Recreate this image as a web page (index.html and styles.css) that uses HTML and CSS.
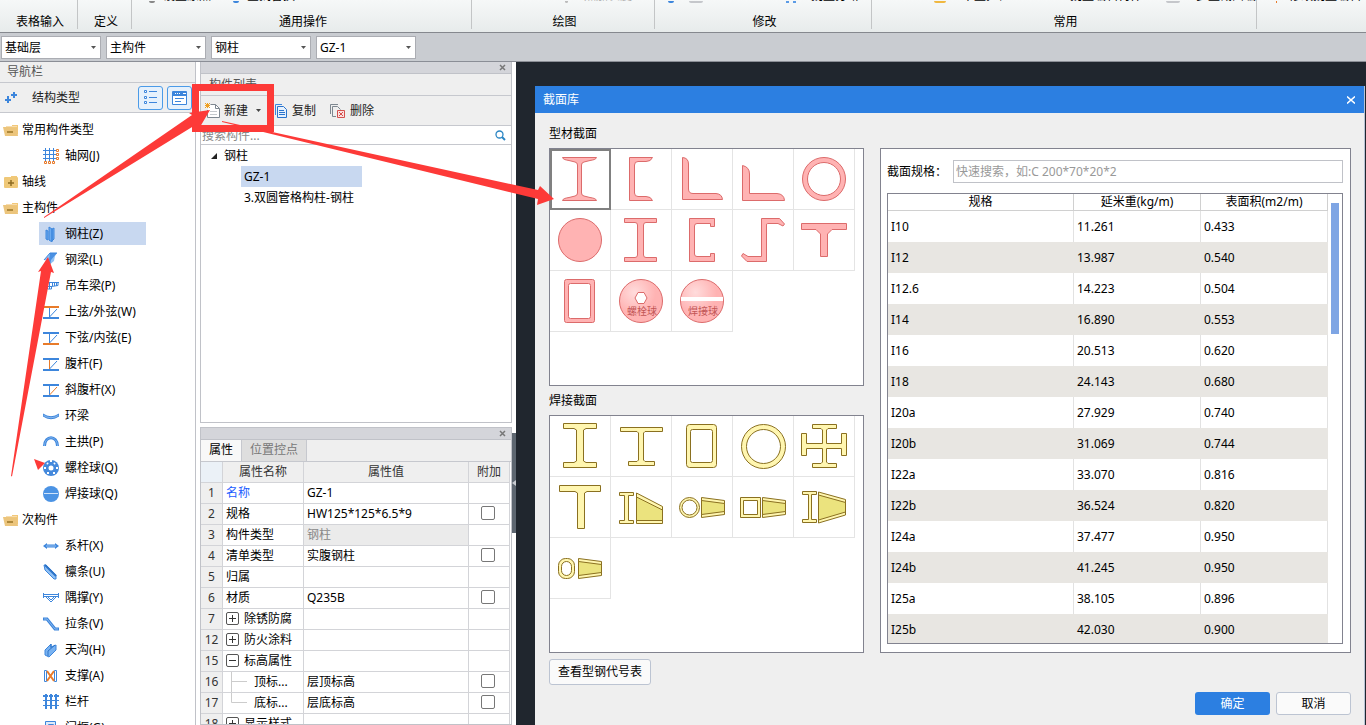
FILE: index.html
```html
<!DOCTYPE html>
<html lang="zh-CN">
<head>
<meta charset="utf-8">
<title>截面库</title>
<link rel="stylesheet" href="styles.css">
</head>
<body>
<svg class="defs" aria-hidden="true">
  <defs>
    <radialGradient id="ball" cx="35%" cy="30%" r="70%"><stop offset="0" stop-color="#ffdcdc"/><stop offset="0.7" stop-color="#ffb3b3"/></radialGradient>
    <symbol id="folder-open" viewBox="0 0 16 12"><path d="M9 1h6v9h-1V4H9z" fill="#f2c878"/><path d="M3 2.500h11" stroke="#f7ddb0"/><path d="M0 3h9l1 1h4l1 8H2z" fill="#ecc57c"/><path d="M4 8h6" stroke="#9a7426" stroke-width="1.500"/></symbol>
    <symbol id="folder-closed" viewBox="0 0 16 12"><path d="M8 0h6v2H8z" fill="#f2c878"/><rect x="1" y="1" width="14" height="11" rx="1" fill="#efc878"/><path d="M8 4v6M5 7h6" stroke="#8f6c22" stroke-width="1.500"/></symbol>
    <symbol id="taper" viewBox="0 0 24 21"><path d="M.5.5L23.500 3.500V17.500L.5 20.500Z" fill="#fff6b0" stroke="#8a7020"/><path d="M.5 3.500L23.500 6.500V14.500L.5 17.500Z" fill="#ebe37e" stroke="#8a7020"/></symbol>
  </defs>
</svg>

<div class="app">
  <header class="ribbon">
    <section class="group g-table"><div class="clip"></div><h2>表格输入</h2></section>
    <section class="group g-define"><div class="clip"></div><h2>定义</h2></section>
    <section class="group g-general"><div class="clip clip-general"><i class="dot gray"></i><span>设置原点</span><i class="dot blue"></i><span>查找替换</span></div><h2>通用操作</h2></section>
    <section class="group g-draw"><div class="clip clip-draw"><i class="dot line"></i><span class="muted">点加长度</span></div><h2>绘图</h2></section>
    <section class="group g-modify"><div class="clip clip-modify"><i class="dot blue"></i><i class="dot bar"></i><i class="dot pair"></i><span>批量打断</span></div><h2>修改</h2></section>
    <section class="group g-common"><div class="clip clip-common"><i class="dot yellow"></i><span>单重拉框</span><span>批量编辑构件</span><i class="dot bar"></i><span>多重截面编</span></div><h2>常用</h2></section>
    <section class="group g-last"><div class="clip clip-last"><i class="dot orange"></i><span>修改批量编辑</span></div></section>
  </header>

  <div class="selectors">
    <select aria-label="楼层"><option>基础层</option></select>
    <select aria-label="构件分类"><option>主构件</option></select>
    <select aria-label="构件类型"><option>钢柱</option></select>
    <select aria-label="构件"><option>GZ-1</option></select>
  </div>

  <main class="workspace">
    <nav class="navigator">
      <h2 class="nav-title">导航栏</h2>
      <div class="nav-tools">
        <svg class="plus" width="13" height="12" viewBox="0 0 13 12"><path d="M3 4v7M0 8h6M9 0v6M6 3h6" stroke="#3d86dc" stroke-width="2"/></svg>
        <span class="nav-label">结构类型</span>
        <button class="view" aria-label="列表"><svg width="13" height="15" viewBox="0 0 13 15"><path d="M5 1.500h8M5 7.500h8M5 12.500h8" stroke="#3d86dc"/><path d="M.5.5h2v2h-2zM.5 6.500h2v2h-2zM.5 11.500h2v2h-2z" fill="#fff" stroke="#3d86dc"/></svg></button>
        <button class="view" aria-label="面板"><svg width="15" height="14" viewBox="0 0 15 14"><path d="M.5.5h14v13H.5z" fill="#fff" stroke="#3d86dc"/><path d="M1 1h13v4H1z" fill="#3d86dc"/><path d="M3 2.500h1M5 2.500h1M7 2.500h1M11 2.500h3" stroke="#fff"/><path d="M3 7.500h9M3 10.500h6" stroke="#3d86dc"/></svg></button>
      </div>
      <ul class="tree">
        <li class="folder"><svg class="f"><use href="#folder-open"/></svg>常用构件类型</li>
        <li class="item"><svg viewBox="0 0 16 16"><path d="M2.500 0v13M6.500 0v13M10.500 0v13M0 2.500h13M0 6.500h13M0 10.500h13" stroke="#3d86dc"/><path d="M13.500 1.500h2v2h-2zM13.500 5.500h2v2h-2zM13.500 9.500h2v2h-2zM1.500 13.500h2v2h-2zM5.500 13.500h2v2h-2zM9.500 13.500h2v2h-2z" fill="#fff" stroke="#e87b2a"/></svg><span>轴网(J)</span></li>
        <li class="folder"><svg class="f"><use href="#folder-closed"/></svg>轴线</li>
        <li class="folder"><svg class="f"><use href="#folder-open"/></svg>主构件</li>
        <li class="item selected"><svg viewBox="0 0 16 16"><path d="M3 4l2 1V14l-2-1zM6 1l3 2v13l-3-2zM9 3l2-1v11l-2 2z" fill="#6aaaf0" stroke="#3d86dc"/></svg><span>钢柱(Z)</span></li>
        <li class="item"><svg viewBox="0 0 16 16"><path d="M1 8L7 1h7l-2 3-1 5-6 5 1-5z" fill="#8fc0f4"/><path d="M7 1h7l-6 7-1 6-2-1 1-5z" fill="#4a90e2"/><path d="M1 8L7 1h7" fill="none" stroke="#3d86dc"/></svg><span>钢梁(L)</span></li>
        <li class="item"><svg viewBox="0 0 16 16"><path d="M0 4.500h16M1 8.500h8M4.500 4v7h4V8.500L15 7.500V4M6.500 4v7M9.500 4v4M11.500 4v4M13.500 4v4" fill="none" stroke="#3d86dc"/></svg><span>吊车梁(P)</span></li>
        <li class="item"><svg viewBox="0 0 16 16"><path d="M0 3h16" stroke="#e87b2a" stroke-width="2"/><path d="M0 14h16" stroke="#3d86dc" stroke-width="2"/><path d="M6.500 4v9L14 5" fill="none" stroke="#3d86dc"/></svg><span>上弦/外弦(W)</span></li>
        <li class="item"><svg viewBox="0 0 16 16"><path d="M0 3h16" stroke="#3d86dc" stroke-width="2"/><path d="M0 14h16" stroke="#e87b2a" stroke-width="2"/><path d="M6.500 4v9L14 5" fill="none" stroke="#3d86dc"/></svg><span>下弦/内弦(E)</span></li>
        <li class="item"><svg viewBox="0 0 16 16"><path d="M0 3h16M0 14h16" stroke="#3d86dc" stroke-width="2"/><path d="M6.500 13L14 5" stroke="#3d86dc"/><path d="M6.500 4v9" stroke="#e87b2a"/></svg><span>腹杆(F)</span></li>
        <li class="item"><svg viewBox="0 0 16 16"><path d="M0 3h16M0 14h16" stroke="#3d86dc" stroke-width="2"/><path d="M6.500 4v9" stroke="#3d86dc"/><path d="M6.500 13L14 5" stroke="#e87b2a"/></svg><span>斜腹杆(X)</span></li>
        <li class="item"><svg viewBox="0 0 16 16"><path d="M0 6Q8 11.500 16 6V8Q8 13.500 0 8Z" fill="#8ab8ee" stroke="#3d86dc"/></svg><span>环梁</span></li>
        <li class="item"><svg viewBox="0 0 16 16"><path d="M1.500 12C2 1 14 1 14.500 12" fill="none" stroke="#3d86dc" stroke-width="3"/><path d="M1.500 12C2 1 14 1 14.500 12" fill="none" stroke="#7fb3ee"/></svg><span>主拱(P)</span></li>
        <li class="item"><svg viewBox="0 0 16 16"><circle cx="8" cy="8" r="8" fill="#4489dc"/><circle cx="8" cy="8" r="2.500" fill="#fff"/><path d="M4 3l1 1M12 3l-1 1M1 8l2 0M15 8h-2M5 14l0-2M11 14l0-2M8 0v2" stroke="#fff" stroke-width="2"/></svg><span>螺栓球(Q)</span></li>
        <li class="item"><svg viewBox="0 0 16 16"><circle cx="8" cy="8" r="8" fill="#4b93e4"/><path d="M1 7.500h14" stroke="#cfe3fa"/></svg><span>焊接球(Q)</span></li>
        <li class="folder"><svg class="f"><use href="#folder-open"/></svg>次构件</li>
        <li class="item"><svg viewBox="0 0 16 16"><path d="M0 8l4-3v1.500h8V5l4 3-4 3V9.500H4V11z" fill="#3d86dc"/><path d="M3 8h10" stroke="#9cc4f3"/></svg><span>系杆(X)</span></li>
        <li class="item"><svg viewBox="0 0 16 16"><path d="M1 1l2 0 10 10v4h-2L2 6z" fill="#8fc0f4" stroke="#3d86dc"/><path d="M2 1l11 11" stroke="#2d74c8" stroke-width="2"/></svg><span>檩条(U)</span></li>
        <li class="item"><svg viewBox="0 0 16 16"><path d="M.5 3v5M15.500 3v5M0 4.500h16M0 6.500h16M3 7l5 5 5-5M5 7l3 3 3-3" fill="none" stroke="#3d86dc"/></svg><span>隅撑(Y)</span></li>
        <li class="item"><svg viewBox="0 0 16 16"><path d="M0 3h4l8 10h4" fill="none" stroke="#3d86dc" stroke-width="3"/><path d="M1 3h3l8 10h3" fill="none" stroke="#8ab8ee"/></svg><span>拉条(V)</span></li>
        <li class="item"><svg viewBox="0 0 16 16"><path d="M2 8l6-6v3l5-2v5l-7 7-4-2z" fill="#79b2f1" stroke="#3d86dc"/><path d="M5 14V9l7-6M8 2v4" stroke="#2d74c8" fill="none"/></svg><span>天沟(H)</span></li>
        <li class="item"><svg viewBox="0 0 16 16"><path d="M1.500 2.500h2v11h-2zM11.500 2.500h2v11h-2z" fill="none" stroke="#3d86dc"/><path d="M4 3l7 10M11 3l-7 10" stroke="#e87b2a" stroke-width="2"/></svg><span>支撑(A)</span></li>
        <li class="item"><svg viewBox="0 0 16 16"><path d="M3 0v15M8 0v15M13 0v15" stroke="#3d86dc" stroke-width="2"/><path d="M0 2h5M6 2h4M11 2h5" stroke="#3d86dc" stroke-width="2"/><path d="M0 6.500h16M0 11.500h16" stroke="#3d86dc"/></svg><span>栏杆</span></li>
        <li class="item"><svg viewBox="0 0 16 16"><path d="M2.500 14V1.500h10V14h-2V4.500h-5V14z" fill="#dceafb" stroke="#3d86dc"/></svg><span>门框(G)</span></li>
      </ul>
    </nav>

    <div class="middle">
      <section class="panel list-panel">
        <div class="grip"><button class="close" aria-label="关闭"><svg width="7" height="7" viewBox="0 0 7 7"><path d="M1 1l5 5M6 1L1 6" stroke="#777" stroke-width="1.500"/></svg></button></div>
        <h2 class="list-title">构件列表</h2>
        <div class="list-tools">
          <button><svg width="15" height="16" viewBox="0 0 15 16"><path d="M5.500 1.500h5l4 4v9H2.500V7" fill="#fff" stroke="#7d8790"/><path d="M10.500 1.500v4h4" fill="none" stroke="#7d8790"/><path d="M5 8.500h7M5 11.500h7" stroke="#c4c8cc"/><path d="M2.500 0v5M0 2.500h5M0 0l5 5M5 0L0 5" stroke="#f0a020"/></svg>新建<svg class="drop" width="5" height="3" viewBox="0 0 5 3"><path d="M0 0h5L2.500 3z" fill="#444"/></svg></button>
          <button><svg width="12" height="14" viewBox="0 0 12 14"><path d="M.5 11V.5H7" fill="none" stroke="#3d86dc"/><path d="M2.500 2.500h6l3 3v8h-9z" fill="#e6f1fd" stroke="#2b74cc"/><path d="M4 6.500h5M4 8.500h6M4 10.500h6" stroke="#2b74cc"/></svg>复制</button>
          <button><svg width="15" height="14" viewBox="0 0 15 14"><path d="M.5 10V.5H8M2.500 12.500v-10h5l3 3M2.500 12.500H6" fill="none" stroke="#7d8790"/><path d="M7.500 6.500h7v7h-7z" fill="#fbe0e0" stroke="#d4504e"/><path d="M9 8l4 4M13 8l-4 4" stroke="#d4504e"/></svg>删除</button>
        </div>
        <div class="list-search"><input type="text" aria-label="搜索构件" placeholder="搜索构件..."><svg width="11" height="11" viewBox="0 0 11 11"><circle cx="4.500" cy="4.500" r="3.500" fill="none" stroke="#2b86c4" stroke-width="1.300"/><path d="M7 7l3 3" stroke="#2b86c4" stroke-width="2"/></svg></div>
        <ul class="members">
          <li class="root"><svg width="6" height="6" viewBox="0 0 6 6"><path d="M6 0v6H0z" fill="#222"/></svg>钢柱</li>
          <li class="child on">GZ-1</li>
          <li class="child">3.双圆管格构柱-钢柱</li>
        </ul>
      </section>

      <section class="panel prop-panel">
        <div class="grip"><button class="close" aria-label="关闭"><svg width="7" height="7" viewBox="0 0 7 7"><path d="M1 1l5 5M6 1L1 6" stroke="#777" stroke-width="1.500"/></svg></button></div>
        <div class="tabs"><button class="tab active">属性</button><button class="tab">位置控点</button></div>
        <table class="props">
          <colgroup><col class="c-no"><col class="c-name"><col><col class="c-add"></colgroup>
          <thead><tr><th></th><th>属性名称</th><th>属性值</th><th>附加</th></tr></thead>
          <tbody>
            <tr><th>1</th><td class="link">名称</td><td>GZ-1</td><td></td></tr>
            <tr><th>2</th><td>规格</td><td>HW125*125*6.5*9</td><td><input type="checkbox" aria-label="附加规格"></td></tr>
            <tr><th>3</th><td>构件类型</td><td class="readonly">钢柱</td><td></td></tr>
            <tr><th>4</th><td>清单类型</td><td>实腹钢柱</td><td><input type="checkbox" aria-label="附加清单类型"></td></tr>
            <tr><th>5</th><td>归属</td><td></td><td></td></tr>
            <tr><th>6</th><td>材质</td><td>Q235B</td><td><input type="checkbox" aria-label="附加材质"></td></tr>
            <tr><th>7</th><td><div class="cell"><button class="fold" aria-label="展开"><svg width="7" height="7" viewBox="0 0 7 7"><path d="M0 3.500h7M3.500 0v7" stroke="#333"/></svg></button>除锈防腐</div></td><td></td><td></td></tr>
            <tr><th>12</th><td><div class="cell"><button class="fold" aria-label="展开"><svg width="7" height="7" viewBox="0 0 7 7"><path d="M0 3.500h7M3.500 0v7" stroke="#333"/></svg></button>防火涂料</div></td><td></td><td></td></tr>
            <tr><th>15</th><td><div class="cell"><button class="fold" aria-label="收起"><svg width="7" height="7" viewBox="0 0 7 7"><path d="M0 3.500h7" stroke="#333"/></svg></button>标高属性</div></td><td></td><td></td></tr>
            <tr><th>16</th><td><div class="cell sub"><svg width="16" height="20" viewBox="0 0 16 20"><path d="M.5 0v20M0 9.500h16" stroke="#ccc"/></svg>顶标...</div></td><td>层顶标高</td><td><input type="checkbox" aria-label="附加顶标高"></td></tr>
            <tr><th>17</th><td><div class="cell sub"><svg width="16" height="20" viewBox="0 0 16 20"><path d="M.5 0v9.500H16" fill="none" stroke="#ccc"/></svg>底标...</div></td><td>层底标高</td><td><input type="checkbox" aria-label="附加底标高"></td></tr>
            <tr><th>18</th><td><div class="cell"><button class="fold" aria-label="展开"><svg width="7" height="7" viewBox="0 0 7 7"><path d="M0 3.500h7M3.500 0v7" stroke="#333"/></svg></button>显示样式</div></td><td></td><td></td></tr>
          </tbody>
        </table>
      </section>
      <button class="splitter" aria-label="折叠"><svg width="4" height="6" viewBox="0 0 4 6"><path d="M4 0v6L0 3z" fill="#c9ccd1"/></svg></button>
    </div>

    <div class="canvas">
      <section class="dialog" role="dialog" aria-labelledby="dlg-title">
        <header class="dlg-bar"><h1 id="dlg-title">截面库</h1><button aria-label="关闭"><svg width="8" height="8" viewBox="0 0 8 8"><path d="M0 .5l8 7M8 .5l-8 7" stroke="#fff" stroke-width="1.500"/></svg></button></header>
        <div class="dlg-body">
          <div class="library">
            <h2>型材截面</h2>
            <div class="shapes pink">
              <button class="on" aria-label="工字钢"><svg viewBox="0 0 61 61"><path d="M12.500 8.500H46.500C46 10.500 43 11 40 11.500L34 13Q31.500 13.500 31.500 16V44Q31.500 46.500 34 47L40 48.500C43 49 46 49.500 46.500 51.500H12.500C13 49.500 16 49 19 48.500L25 47Q27.500 46.500 27.500 44V16Q27.500 13.500 25 13L19 11.500C16 11 13 10.500 12.500 8.500Z"/></svg></button>
              <button aria-label="槽钢"><svg viewBox="0 0 61 61"><path d="M18.500 8.500H41.500Q40 12.500 35 12.500H27Q23.500 12.500 23.500 16V44Q23.500 47.500 27 47.500H35Q40 47.500 41.500 51.500H18.500Z"/></svg></button>
              <button aria-label="等边角钢"><svg viewBox="0 0 61 61"><path d="M10.500 8.500Q16.500 9 16.500 15V40Q16.500 44.500 21 44.500H44Q50 45 50.500 50.500H10.500Z"/></svg></button>
              <button aria-label="不等边角钢"><svg viewBox="0 0 61 61"><path d="M9.500 16.500Q16.500 18 16.500 25V44.500H44Q51 45 51.500 51.500H9.500Z"/></svg></button>
              <button aria-label="圆管"><svg viewBox="0 0 61 61"><circle cx="30" cy="30" r="21.500"/><circle class="hole" cx="30" cy="30" r="16.500"/></svg></button>
              <button aria-label="圆钢"><svg viewBox="0 0 61 61"><circle cx="30" cy="30" r="21.500"/></svg></button>
              <button aria-label="H型钢"><svg viewBox="0 0 61 61"><path d="M13.500 8.500H45.500V12.500H35Q32.500 12.500 32.500 15V45Q32.500 47.500 35 47.500H45.500V51.500H13.500V47.500H24Q26.500 47.500 26.500 45V15Q26.500 12.500 24 12.500H13.500Z"/></svg></button>
              <button aria-label="C型钢"><svg viewBox="0 0 61 61"><path d="M17.500 8.500H42.500V16.500H38.500V13.500H25Q22.500 13.500 22.500 16V44Q22.500 46.500 25 46.500H38.500V43.500H42.500V51.500H17.500Z"/></svg></button>
              <button aria-label="Z型钢"><svg viewBox="0 0 61 61"><path d="M28.500 8.500H46.500L51.500 14L50 16L45 13.500H34.500Q33.500 13.500 33.500 15V51.500H14L8.500 46L10 43.500L15 46.500H28.500Z"/></svg></button>
              <button aria-label="T型钢"><svg viewBox="0 0 61 61"><path d="M7.500 13.500H52.500V19.500H38L33.500 24V46.500H26.500V24L22 19.500H7.500Z"/></svg></button>
              <button aria-label="方管"><svg viewBox="0 0 61 61"><rect x="14.500" y="8.500" width="30" height="43" rx="2"/><rect class="hole" x="18.500" y="12.500" width="22" height="35" rx="2"/></svg></button>
              <button aria-label="螺栓球"><svg viewBox="0 0 61 61"><circle cx="30" cy="30" r="21.500" fill="url(#ball)"/><path class="hole" d="M27 21.500h6l3 5.500-3 5.500h-6l-3-5.500z"/><text x="31" y="44">螺栓球</text></svg></button>
              <button aria-label="焊接球"><svg viewBox="0 0 61 61"><circle cx="30" cy="30" r="21.500" fill="url(#ball)"/><path class="band" d="M9 28h42"/><text x="31" y="44">焊接球</text></svg></button>
            </div>
            <h2>焊接截面</h2>
            <div class="shapes yellow">
              <button aria-label="焊接工字"><svg viewBox="0 0 61 61"><path d="M13.500 7.500H46.500V12.500H36L33.500 14V45L36 46.500H46.500V51.500H13.500V46.500H24L26.500 45V14L24 12.500H13.500Z"/></svg></button>
              <button aria-label="不等翼缘工字"><svg viewBox="0 0 61 61"><path d="M9.500 11.500H51.500V15.500H34L32.500 17V44L34 45.500H43.500V49.500H17.500V45.500H26L27.500 44V17L26 15.500H9.500Z"/></svg></button>
              <button aria-label="箱形"><svg viewBox="0 0 61 61"><rect x="14.500" y="8.500" width="30" height="43" rx="3"/><rect class="hole" x="18.500" y="13.500" width="22" height="33" rx="2"/></svg></button>
              <button aria-label="焊接圆管"><svg viewBox="0 0 61 61"><circle cx="30.500" cy="30.500" r="22"/><circle class="hole" cx="30.500" cy="30.500" r="17"/></svg></button>
              <button aria-label="十字形"><svg viewBox="0 0 61 61"><path d="M18.500 8.500H42.500V12.500H34L32.500 14V27.500H47.500V17.500H52.500V39.500H47.500V32.500H32.500V46L34 47.500H42.500V51.500H18.500V47.500H27L28.500 46V32.500H12.500V39.500H7.500V17.500H12.500V27.500H28.500V14L27 12.500H18.500Z"/></svg></button>
              <button aria-label="焊接T形"><svg viewBox="0 0 61 61"><path d="M9.500 8.500H50.500V14.500H37L34.500 16V51.500H27.500V16L25 14.500H9.500Z"/></svg></button>
              <button aria-label="变截面工字"><svg viewBox="0 0 61 61"><path d="M8.500 15.500H22.500V18.500H17.500V43.500H22.500V46.500H8.500V43.500H13.500V18.500H8.500Z"/><path d="M25.500 16L51.500 29.500V46.500H25.500Z"/><path class="deep" d="M25.500 20L51.500 33V43.500H25.500Z"/></svg></button>
              <button aria-label="变截面圆管"><svg viewBox="0 0 61 61"><circle cx="17.500" cy="30.500" r="10"/><circle class="hole" cx="17.500" cy="30.500" r="7.500"/><use href="#taper" x="29" y="20" width="24" height="21"/></svg></button>
              <button aria-label="变截面方管"><svg viewBox="0 0 61 61"><path d="M7.500 20.500H27.500V40.500H7.500Z"/><path class="hole" d="M10.500 23.500H24.500V37.500H10.500Z"/><use href="#taper" x="29" y="20" width="24" height="21"/></svg></button>
              <button aria-label="对称变截面工字"><svg viewBox="0 0 61 61"><path d="M8.500 14.500H22.500V17.500H17.500V42.500H22.500V45.500H8.500V42.500H14.500V17.500H8.500Z"/><path d="M24.500 15L51.500 22.500V38L24.500 46Z"/><path class="deep" d="M24.500 18L51.500 25.500V35L24.500 43Z"/></svg></button>
              <button aria-label="变截面椭圆管"><svg viewBox="0 0 61 61"><rect x="8.500" y="20.500" width="16" height="20" rx="7"/><rect class="hole" x="11.500" y="23.500" width="10" height="14" rx="5"/><use href="#taper" x="28" y="20" width="24" height="21"/></svg></button>
            </div>
            <button class="code-table">查看型钢代号表</button>
          </div>
          <div class="details">
            <div class="spec">
              <div class="spec-search"><label for="spec">截面规格：</label><input id="spec" type="text" placeholder="快速搜索，如:C 200*70*20*2"></div>
              <div class="spec-frame">
                <table class="spec-table">
                  <colgroup><col><col class="c-val"><col class="c-val"></colgroup>
                  <thead><tr><th>规格</th><th>延米重(kg/m)</th><th>表面积(m2/m)</th></tr></thead>
                  <tbody>
                    <tr><td>I10</td><td>11.261</td><td>0.433</td></tr>
                    <tr><td>I12</td><td>13.987</td><td>0.540</td></tr>
                    <tr><td>I12.6</td><td>14.223</td><td>0.504</td></tr>
                    <tr><td>I14</td><td>16.890</td><td>0.553</td></tr>
                    <tr><td>I16</td><td>20.513</td><td>0.620</td></tr>
                    <tr><td>I18</td><td>24.143</td><td>0.680</td></tr>
                    <tr><td>I20a</td><td>27.929</td><td>0.740</td></tr>
                    <tr><td>I20b</td><td>31.069</td><td>0.744</td></tr>
                    <tr><td>I22a</td><td>33.070</td><td>0.816</td></tr>
                    <tr><td>I22b</td><td>36.524</td><td>0.820</td></tr>
                    <tr><td>I24a</td><td>37.477</td><td>0.950</td></tr>
                    <tr><td>I24b</td><td>41.245</td><td>0.950</td></tr>
                    <tr><td>I25a</td><td>38.105</td><td>0.896</td></tr>
                    <tr><td>I25b</td><td>42.030</td><td>0.900</td></tr>
                  </tbody>
                </table>
                <div class="scroll"><div class="thumb"></div></div>
              </div>
            </div>
            <footer class="actions"><button class="ok">确定</button><button class="cancel">取消</button></footer>
          </div>
        </div>
      </section>
    </div>
  </main>
</div>

<svg class="marks" width="1366" height="725" viewBox="0 0 1366 725" aria-hidden="true">
  <rect x="195.500" y="87.500" width="75" height="41" fill="none" stroke="#fd3a38" stroke-width="7"/>
  <path d="M48 257L54 273L51 272L12 476.500L11 476L41 271L38 272Z"/>
  <path d="M44 217L192 115L189 113L210 110L200 127L197 124L44 218Z"/>
  <path d="M222 121L538 190L540 186L554 199L537 205L538 199L222 122Z"/>
  <path d="M34 459L45 463L38 470Z"/>
</svg>
</body>
</html>
```
FILE: styles.css
```css
* { box-sizing: border-box; }
html, body { height: 100%; }
body {
  margin: 0;
  overflow: hidden;
  position: relative;
  font: 12px/16px "Noto Sans", "Noto Sans CJK SC", sans-serif;
  color: #000;
  background: #fff;
}
h1, h2 { margin: 0; font-size: 12px; font-weight: 400; }
ul { margin: 0; padding: 0; list-style: none; }
button, input, select { font: inherit; color: inherit; margin: 0; }
button { padding: 0; border: 0; background: none; }
svg { display: block; flex: none; }
table { border-collapse: separate; border-spacing: 0; table-layout: fixed; }
th { font-weight: 400; }
th, td { padding: 0; }

.defs { position: absolute; width: 0; height: 0; }
.marks { position: absolute; top: 0; left: 0; pointer-events: none; fill: #fd3a38; }

.app { height: 100%; display: flex; flex-direction: column; }

/* ribbon */
.ribbon {
  flex: none;
  height: 33px;
  display: flex;
  background: linear-gradient(#f6f8f8, #e7ebeb);
  border-bottom: 1px solid #85888e;
}
.group {
  display: flex;
  flex-direction: column;
  justify-content: space-between;
  flex: none;
  height: 29px;
  border-right: 1px solid #c3c5c6;
  text-align: center;
}
.group h2 { line-height: 14px; padding-left: 3px; }
.g-table { width: 78px; }
.g-define { width: 54px; }
.g-general { width: 340px; }
.g-draw { width: 183px; }
.g-modify { width: 217px; }
.g-common { width: 385px; }
.g-last { flex: 1; border-right: 0; min-width: 0; }
.clip { height: 3px; overflow: hidden; display: flex; align-items: flex-end; white-space: nowrap; line-height: 14px; }
.clip span { flex: none; }
.muted { color: #aaa; }
.dot { flex: none; width: 6px; height: 2px; border-radius: 0 0 3px 3px; }
.dot.gray { background: #888; }
.dot.blue { background: #3d86dc; }
.dot.line { width: 3px; background: #bbb; }
.dot.bar { width: 14px; background: #c5c7cb; }
.dot.pair { width: 10px; border: solid #5b9be6; border-width: 0 3px; border-radius: 0; }
.dot.yellow { width: 12px; background: #f0b840; }
.dot.orange { width: 1px; background: #e87b2a; border-radius: 0; }
.clip-general { padding-left: 17px; gap: 8px; }
.clip-general .blue { margin-left: 14px; }
.clip-draw { padding-left: 93px; gap: 16px; }
.clip-modify { padding-left: 13px; gap: 15px; }
.clip-modify .pair { margin-left: 68px; }
.clip-common { padding-left: 62px; gap: 16px; }
.clip-common span + span { margin-left: 44px; }
.clip-common .bar { margin-left: 8px; }
.clip-last { padding-left: 19px; gap: 12px; }

/* selectors */
.selectors {
  flex: none;
  height: 29px;
  display: flex;
  align-items: center;
  gap: 5px;
  padding: 0 1px;
  background: #c9ccd1;
  border-bottom: 1px solid #8b8e96;
}
.selectors select {
  appearance: none;
  width: 100px;
  height: 23px;
  padding: 1px 16px 0 3px;
  border: 1px solid #abadb3;
  border-radius: 0;
  background: #fff url("data:image/svg+xml,%3Csvg xmlns='http://www.w3.org/2000/svg' width='5' height='3'%3E%3Cpath d='M0 0h5L2.500 3z' fill='%23555'/%3E%3C/svg%3E") no-repeat right 4px center;
}

.workspace { flex: 1; min-height: 0; display: flex; }

/* navigator */
.navigator { flex: none; width: 196px; border-right: 1px solid #c0c2c8; overflow: hidden; }
.nav-title { height: 21px; padding: 2px 7px; color: #555; background: #efefef; border-bottom: 1px solid #c6c8ce; }
.nav-tools {
  height: 30px;
  display: flex;
  align-items: center;
  gap: 4px;
  padding: 0 3px 0 5px;
  background: #efefef;
  border-bottom: 1px solid #c6c8ce;
}
.nav-label { flex: 1; padding-left: 10px; color: #222; }
.view {
  width: 25px;
  height: 24px;
  display: grid;
  place-items: center;
  border: 1px solid #4b9be8;
  border-radius: 3px;
  background: #e6f1fc;
}
.tree { padding-top: 4px; }
.tree li { height: 26px; display: flex; align-items: center; }
.folder { padding-left: 3px; gap: 3px; }
.folder .f { width: 16px; height: 12px; }
.item { margin-left: 39px; padding-left: 4px; gap: 6px; }
.item svg { width: 16px; height: 16px; }
.tree .selected { width: 107px; height: 23px; margin-top: 1px; margin-bottom: 2px; background: #c8d8f0; }

/* middle column */
.middle {
  flex: none;
  width: 320px;
  padding: 0 4px;
  position: relative;
  display: flex;
  flex-direction: column;
  gap: 4px;
}
.panel { border: 1px solid #c0c2c8; overflow: hidden; }
.list-panel { flex: 0 0 361px; display: flex; flex-direction: column; border-top: 0; }
.prop-panel { flex: 1; min-height: 0; }
.grip { height: 12px; display: flex; justify-content: flex-end; padding: 0 5px; background: #d4d5da; border-bottom: 1px solid #c0c2c8; }
.close { display: grid; place-items: center; }
.list-title { height: 22px; padding: 3px 8px 0; color: #555; background: #efefef; border-bottom: 1px solid #c6c8ce; }
.list-tools {
  height: 30px;
  display: flex;
  align-items: center;
  gap: 14px;
  padding-left: 4px;
  color: #222;
  background: #efefef;
  border-bottom: 1px solid #c6c8ce;
}
.list-tools button { display: flex; align-items: center; gap: 4px; }
.list-tools button + button { gap: 5px; }
.list-tools .drop { margin-left: 4px; }
.list-search { height: 19px; display: flex; align-items: center; padding: 0 5px 0 1px; border-bottom: 1px solid #c6c8ce; }
.list-search input { flex: 1; min-width: 0; border: 0; padding: 0; height: 18px; outline: 0; }
::placeholder { color: #888; opacity: 1; }
.members li { height: 21px; line-height: 21px; }
.root { display: flex; align-items: center; gap: 7px; padding-left: 10px; }
.child { width: 121px; margin-left: 40px; padding-left: 3px; white-space: nowrap; }
.child.on { background: #c8d8f0; }

.tabs { height: 22px; display: flex; background: #efefef; border-bottom: 1px solid #c6c8ce; }
.tab { padding: 0 8px 2px; color: #777; background: #dedede; border-right: 1px solid #c6c8ce; }
.tab.active { color: #000; background: #f8f8f8; }
.props { width: 309px; }
.props th, .props td { height: 21px; line-height: 16px; border-right: 1px solid #d3d4d8; border-bottom: 1px solid #d3d4d8; white-space: nowrap; overflow: hidden; }
.props th { color: #333; background: #efefef; }
.props thead th:first-child { background: #ebf1f7; }
.props td:nth-child(2), .props td:nth-child(3) { padding-left: 3px; }
.c-no { width: 22px; }
.c-name { width: 81px; }
.c-add { width: 41px; }
.props .link { color: #1a5cff; }
.props .readonly { color: #888; background: #ebebeb; }
.props input {
  appearance: none;
  display: block;
  width: 14px;
  height: 14px;
  margin: 0 0 3px 12px;
  border: 1px solid #777;
  border-radius: 2px;
  background: #fff;
}
.cell { height: 20px; display: flex; align-items: center; gap: 5px; }
.cell.sub { gap: 7px; padding-left: 5px; }
.fold {
  width: 13px;
  height: 13px;
  margin-bottom: 2px;
  display: grid;
  place-items: center;
  border: 1px solid #555;
  border-radius: 2px;
}
.splitter {
  position: absolute;
  right: 0;
  top: 371px;
  width: 4px;
  height: 100px;
  display: grid;
  place-items: center;
  background: #5d6670;
}

/* drawing canvas and section dialog */
.canvas { flex: 1; min-width: 0; position: relative; background: #20262e; }
.dialog {
  position: absolute;
  top: 24px;
  left: 19px;
  right: 1px;
  bottom: 0;
  display: flex;
  flex-direction: column;
  background: #efefef;
  border-right: 1px solid #b8c4d6;
}
.dlg-bar {
  flex: none;
  height: 27px;
  display: flex;
  align-items: center;
  justify-content: space-between;
  padding: 0 9px 0 8px;
  color: #fff;
  background: #2c7fe1;
}
.dlg-body { flex: 1; min-height: 0; display: flex; gap: 16px; padding: 0 13px 10px 14px; }
.library { flex: none; width: 315px; display: flex; flex-direction: column; align-items: flex-start; }
.library h2 { height: 29px; padding-top: 7px; }
.library h2:first-child { height: 35px; padding-top: 13px; }
.shapes {
  flex: 1;
  width: 100%;
  min-height: 0;
  display: grid;
  grid-template-columns: repeat(5, 61px);
  grid-auto-rows: 61px;
  align-content: start;
  background: #fff;
  border: 1px solid #82838f;
}
.shapes button { border: solid #e4e4e4; border-width: 0 1px 1px 0; overflow: hidden; }
.shapes .on { outline: 2px solid #808080; outline-offset: -2px; border-color: #808080; }
.shapes svg { width: 61px; height: 61px; }
.pink svg { fill: #ffb3b3; stroke: #dc6b6b; }
.yellow svg { fill: #fff6b0; stroke: #8a7020; }
.shapes .hole { fill: #fff; }
.shapes .deep { fill: #ebe37e; }
.shapes .band { stroke: #fff; stroke-width: 4px; }
.shapes text { font-size: 10px; text-anchor: middle; fill: #c25555; stroke: none; }
.code-table {
  width: 102px;
  height: 26px;
  margin: 6px 0 30px;
  border: 1px solid #bcc4d2;
  border-radius: 3px;
  background: #fafafa;
}
.details { flex: 1; min-width: 0; display: flex; flex-direction: column; padding-top: 35px; }
.spec { flex: 1; min-height: 0; display: flex; flex-direction: column; gap: 10px; padding: 11px 7px 8px 6px; background: #fff; border: 1px solid #82838f; }
.spec-search { display: flex; align-items: center; }
.spec-search label { width: 66px; }
.spec-search input { flex: 1; min-width: 0; height: 23px; padding: 0 2px; border: 1px solid #c0c2c8; border-radius: 0; }
.spec-search ::placeholder { color: #999; }
.spec-frame { flex: 1; min-height: 0; display: flex; overflow: hidden; border: 1px solid #82838f; }
.spec-table { flex: 1; min-width: 0; align-self: flex-start; }
.spec-table th { height: 17px; line-height: 16px; border: solid #d0d0d0; border-width: 0 1px 1px 0; }
.spec-table td { height: 31px; padding-left: 3px; border-right: 1px solid #e2e2e2; }
.spec-table tbody tr:nth-child(even) td { background: #e8e6e2; border-color: #e8e6e2; }
.c-val { width: 127px; }
.scroll { flex: none; width: 14px; padding: 9px 3px 0; }
.thumb { height: 131px; background: #7ea5e4; }
.actions { flex: none; display: flex; justify-content: flex-end; gap: 6px; padding-top: 39px; }
.actions button { width: 75px; height: 23px; border-radius: 3px; }
.ok { color: #fff; background: #2c7fe1; }
.actions .cancel { background: #fafafa; border: 1px solid #bcc4d2; }
```
